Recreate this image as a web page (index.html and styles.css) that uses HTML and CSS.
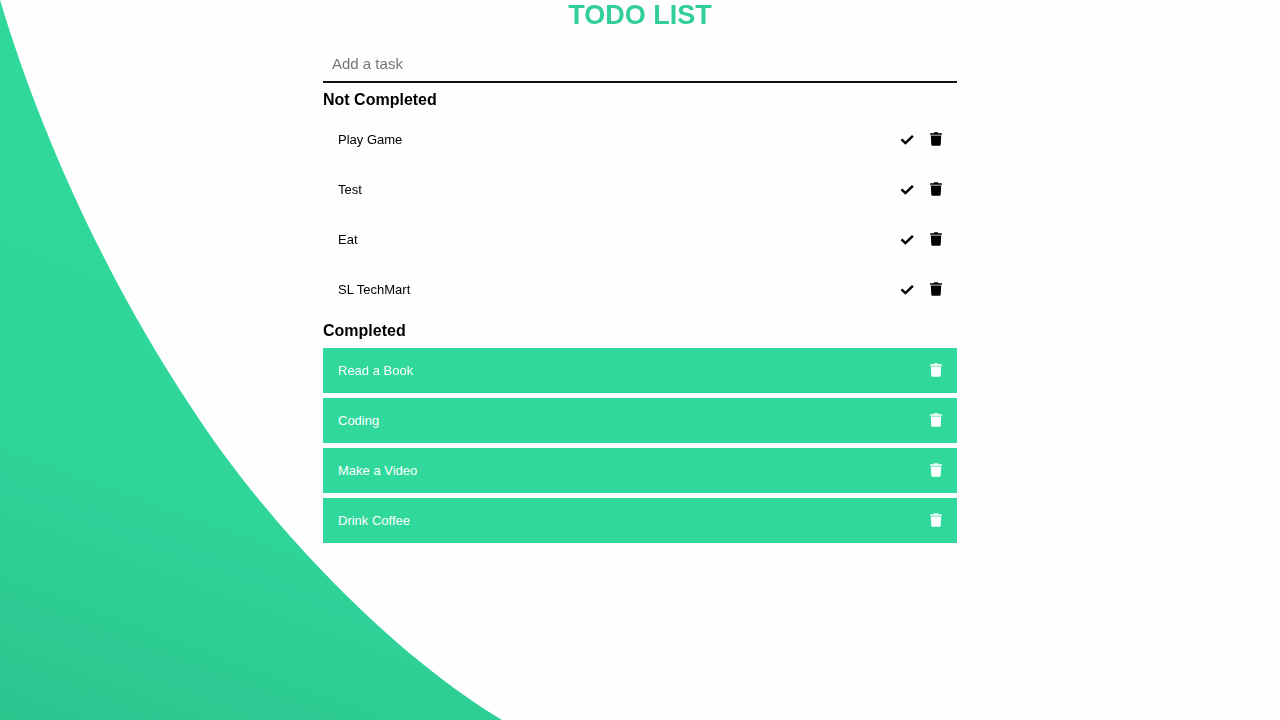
FILE: index.html
```html
<!DOCTYPE html>
<html lang="en">
<head>
<meta charset="utf-8">
<meta name="viewport" content="width=device-width, initial-scale=1">
<title>Todo List</title>
<link rel="stylesheet" href="styles.css">
</head>
<body>
<svg class="backdrop" viewBox="0 0 1280 720" preserveAspectRatio="none" aria-hidden="true">
  <defs>
    <linearGradient id="wave" gradientUnits="userSpaceOnUse" x1="200" y1="200" x2="0" y2="740">
      <stop offset="0" stop-color="#30d89b"/>
      <stop offset="0.5" stop-color="#2fd499"/>
      <stop offset="1" stop-color="#2bc48e"/>
    </linearGradient>
  </defs>
  <path fill="url(#wave)" d="M0 0C39 130 105 278 193 410C262 516 384 649 502 720H0Z"/>
</svg>
<svg class="sprite" aria-hidden="true">
  <symbol id="check" viewBox="0 0 14 14"><path d="M1.500 7.400 5.400 11.100 12.900 3.800" fill="none" stroke="currentColor" stroke-width="2.500"/></symbol>
  <symbol id="trash" viewBox="0 0 14 14"><path d="M5 .6Q5.200 .2 5.600 .2H8.400Q8.800 .2 9 .6L9.300 1.300H12.600Q13 1.300 13 1.700V2.700H1V1.700Q1 1.300 1.400 1.300H4.700ZM1.800 3.400H12.200L11.700 12.600Q11.600 13.800 10.500 13.800H3.500Q2.400 13.800 2.300 12.600Z"/></symbol>
</svg>
<main class="todo">
  <h1 class="title">TODO LIST</h1>
  <form class="add"><input class="field" type="text" placeholder="Add a task" aria-label="Add a task"></form>
  <section>
    <h2 class="heading">Not Completed</h2>
    <ul class="list">
      <li class="task"><span class="name">Play Game</span><button class="action" type="button" aria-label="Complete Play Game"><svg class="icon"><use href="#check"/></svg></button><button class="action" type="button" aria-label="Delete Play Game"><svg class="icon"><use href="#trash"/></svg></button></li>
      <li class="task"><span class="name">Test</span><button class="action" type="button" aria-label="Complete Test"><svg class="icon"><use href="#check"/></svg></button><button class="action" type="button" aria-label="Delete Test"><svg class="icon"><use href="#trash"/></svg></button></li>
      <li class="task"><span class="name">Eat</span><button class="action" type="button" aria-label="Complete Eat"><svg class="icon"><use href="#check"/></svg></button><button class="action" type="button" aria-label="Delete Eat"><svg class="icon"><use href="#trash"/></svg></button></li>
      <li class="task"><span class="name">SL TechMart</span><button class="action" type="button" aria-label="Complete SL TechMart"><svg class="icon"><use href="#check"/></svg></button><button class="action" type="button" aria-label="Delete SL TechMart"><svg class="icon"><use href="#trash"/></svg></button></li>
    </ul>
  </section>
  <section>
    <h2 class="heading">Completed</h2>
    <ul class="list">
      <li class="task done"><span class="name">Read a Book</span><button class="action" type="button" aria-label="Delete Read a Book"><svg class="icon"><use href="#trash"/></svg></button></li>
      <li class="task done"><span class="name">Coding</span><button class="action" type="button" aria-label="Delete Coding"><svg class="icon"><use href="#trash"/></svg></button></li>
      <li class="task done"><span class="name">Make a Video</span><button class="action" type="button" aria-label="Delete Make a Video"><svg class="icon"><use href="#trash"/></svg></button></li>
      <li class="task done"><span class="name">Drink Coffee</span><button class="action" type="button" aria-label="Delete Drink Coffee"><svg class="icon"><use href="#trash"/></svg></button></li>
    </ul>
  </section>
</main>
</body>
</html>
```
FILE: styles.css
```css
* {
  box-sizing: border-box;
  margin: 0;
  padding: 0;
}

body {
  background: #fefefe;
  color: #000;
  font-family: "Liberation Sans", Arial, sans-serif;
}

.backdrop {
  position: fixed;
  inset: 0;
  z-index: -1;
  width: 100%;
  height: 100%;
}

.sprite {
  position: absolute;
  width: 0;
  height: 0;
}

.todo {
  width: 50%;
  margin: 0 auto;
  padding: 0 3px;
}

.title {
  color: #30cf96;
  font-size: 27px;
  line-height: 30px;
  text-align: center;
}

.add {
  padding: 16px 0 8px;
}

.field {
  display: block;
  width: 100%;
  height: 37px;
  padding: 0 9px;
  border: 0;
  border-bottom: 2px solid #111;
  outline: 0;
  background: transparent;
  font: 15px "Liberation Sans", Arial, sans-serif;
}

.field::placeholder {
  color: #757575;
}

.heading {
  font-size: 16px;
  line-height: 18px;
  padding-bottom: 8px;
}

.list {
  display: flex;
  flex-direction: column;
  gap: 5px;
  padding-bottom: 10px;
  list-style: none;
}

.task {
  display: flex;
  align-items: center;
  gap: 15px;
  height: 45px;
  padding: 0 14px 0 15px;
  font-size: 13px;
}

.done {
  background: #30d89b;
  color: #fff;
}

.name {
  flex: 1;
}

.action {
  display: flex;
  padding-bottom: 2px;
  border: 0;
  background: none;
  color: inherit;
  cursor: pointer;
}

.icon {
  width: 14px;
  height: 14px;
  fill: currentColor;
}
```
